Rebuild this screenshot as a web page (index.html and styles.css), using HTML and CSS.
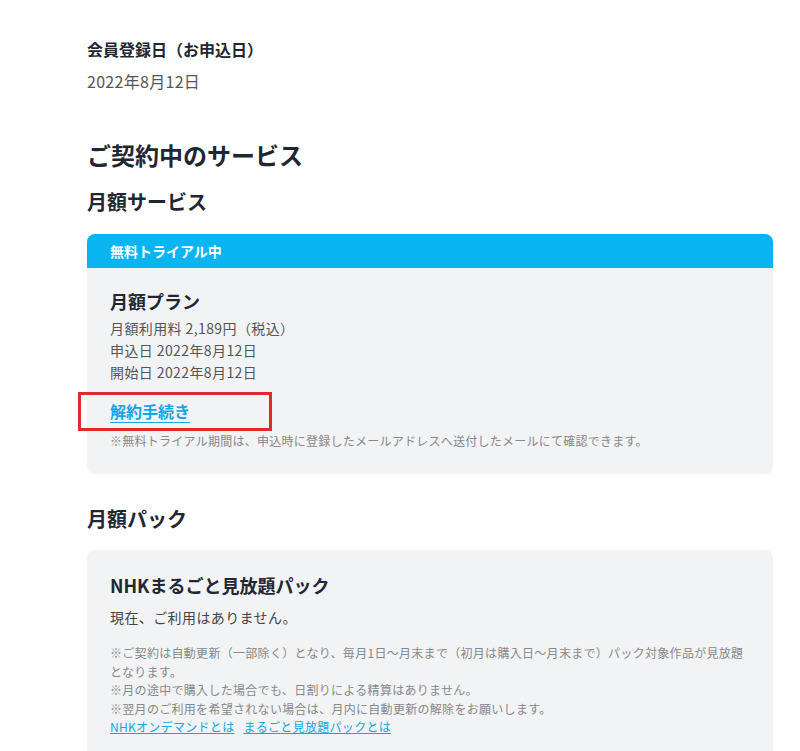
FILE: index.html
```html
<!DOCTYPE html>
<html lang="ja">
<head>
    <meta charset="UTF-8">
    <meta name="viewport" content="width=device-width, initial-scale=1.0">
    <title>会員情報</title>
    <link rel="stylesheet" href="styles.css">
</head>
<body>
    <main class="page">
        <section class="info">
            <h3 class="info-label">会員登録日（お申込日）</h3>
            <p class="info-value">2022年8月12日</p>
        </section>

        <h1 class="page-title">ご契約中のサービス</h1>

        <h2 class="section-title">月額サービス</h2>
        <div class="card">
            <div class="card-status">無料トライアル中</div>
            <div class="card-body">
                <h3 class="plan-name">月額プラン</h3>
                <ul class="plan-details">
                    <li>月額利用料 2,189円（税込）</li>
                    <li>申込日 2022年8月12日</li>
                    <li>開始日 2022年8月12日</li>
                </ul>
                <div class="cancel">
                    <a href="#" class="cancel-link">解約手続き</a>
                </div>
                <p class="note">※無料トライアル期間は、申込時に登録したメールアドレスへ送付したメールにて確認できます。</p>
            </div>
        </div>

        <h2 class="section-title pack-title">月額パック</h2>
        <div class="card">
            <div class="card-body pack-body">
                <h3 class="plan-name">NHKまるごと見放題パック</h3>
                <p class="plan-empty">現在、ご利用はありません。</p>
                <div class="notes">
                    <p>※ご契約は自動更新（一部除く）となり、毎月1日～月末まで（初月は購入日～月末まで）パック対象作品が見放題となります。</p>
                    <p>※月の途中で購入した場合でも、日割りによる精算はありません。</p>
                    <p>※翌月のご利用を希望されない場合は、月内に自動更新の解除をお願いします。</p>
                    <p class="links">
                        <a href="#">NHKオンデマンドとは</a>
                        <a href="#">まるごと見放題パックとは</a>
                    </p>
                </div>
            </div>
        </div>
    </main>
</body>
</html>
```

FILE: styles.css
```css
body {
    font-family: "Noto Sans CJK JP", "Noto Sans", sans-serif;
    margin: 0;
    padding: 0;
    background-color: #fff;
    color: #1f2733;
}
.page {
    width: 686px;
    margin: 0 0 0 87px;
    padding-top: 36px;
}
.info-label {
    font-size: 16px;
    font-weight: bold;
    line-height: 26px;
    margin: 0;
}
.info-value {
    font-size: 16px;
    line-height: 26px;
    color: #555;
    margin: 6px 0 0;
    letter-spacing: 0.3px;
}
.page-title {
    font-size: 24px;
    font-weight: bold;
    line-height: 36px;
    margin: 43px 0 0;
}
.section-title {
    font-size: 20px;
    font-weight: bold;
    line-height: 30px;
    margin: 14px 0 17px;
}
.pack-title {
    margin-top: 30px;
    margin-bottom: 16px;
}
.card {
    background: #f2f3f5;
    border-radius: 8px;
}
.card-status {
    background: #0ab4f1;
    color: #fff;
    font-size: 14px;
    font-weight: bold;
    line-height: 34px;
    padding: 0 23px;
    border-radius: 8px 8px 0 0;
}
.card-body {
    padding: 19px 23px 24px;
}
.plan-name {
    font-size: 18px;
    font-weight: bold;
    line-height: 28px;
    margin: 0 0 2px;
}
.plan-details {
    list-style: none;
    margin: 0;
    padding: 0;
    font-size: 14px;
    line-height: 22px;
    color: #555;
    letter-spacing: 0.4px;
}
.cancel {
    box-sizing: border-box;
    margin: 9px 0 0 -32px;
    width: 194px;
    padding: 4px 0 4px 29px;
    border: 3px solid #e02a2f;
    line-height: 25px;
}
.cancel-link {
    color: #11a7e4;
    font-size: 16px;
    font-weight: bold;
    text-decoration: underline;
    text-underline-offset: 4px;
}
.note {
    font-size: 12px;
    line-height: 18px;
    color: #888;
    margin: 1px 0 0;
    letter-spacing: 0.25px;
}
.pack-body {
    padding-top: 21px;
    padding-bottom: 24px;
}
.plan-empty {
    font-size: 14px;
    line-height: 22px;
    color: #444;
    margin: 7px 0 0;
    letter-spacing: 0.4px;
}
.notes {
    margin-top: 16px;
    font-size: 12px;
    line-height: 18.5px;
    color: #888;
    letter-spacing: 0.3px;
}
.notes p {
    margin: 0;
}
.links a {
    color: #11a7e4;
    text-decoration: underline;
    margin-right: 6px;
}
```
